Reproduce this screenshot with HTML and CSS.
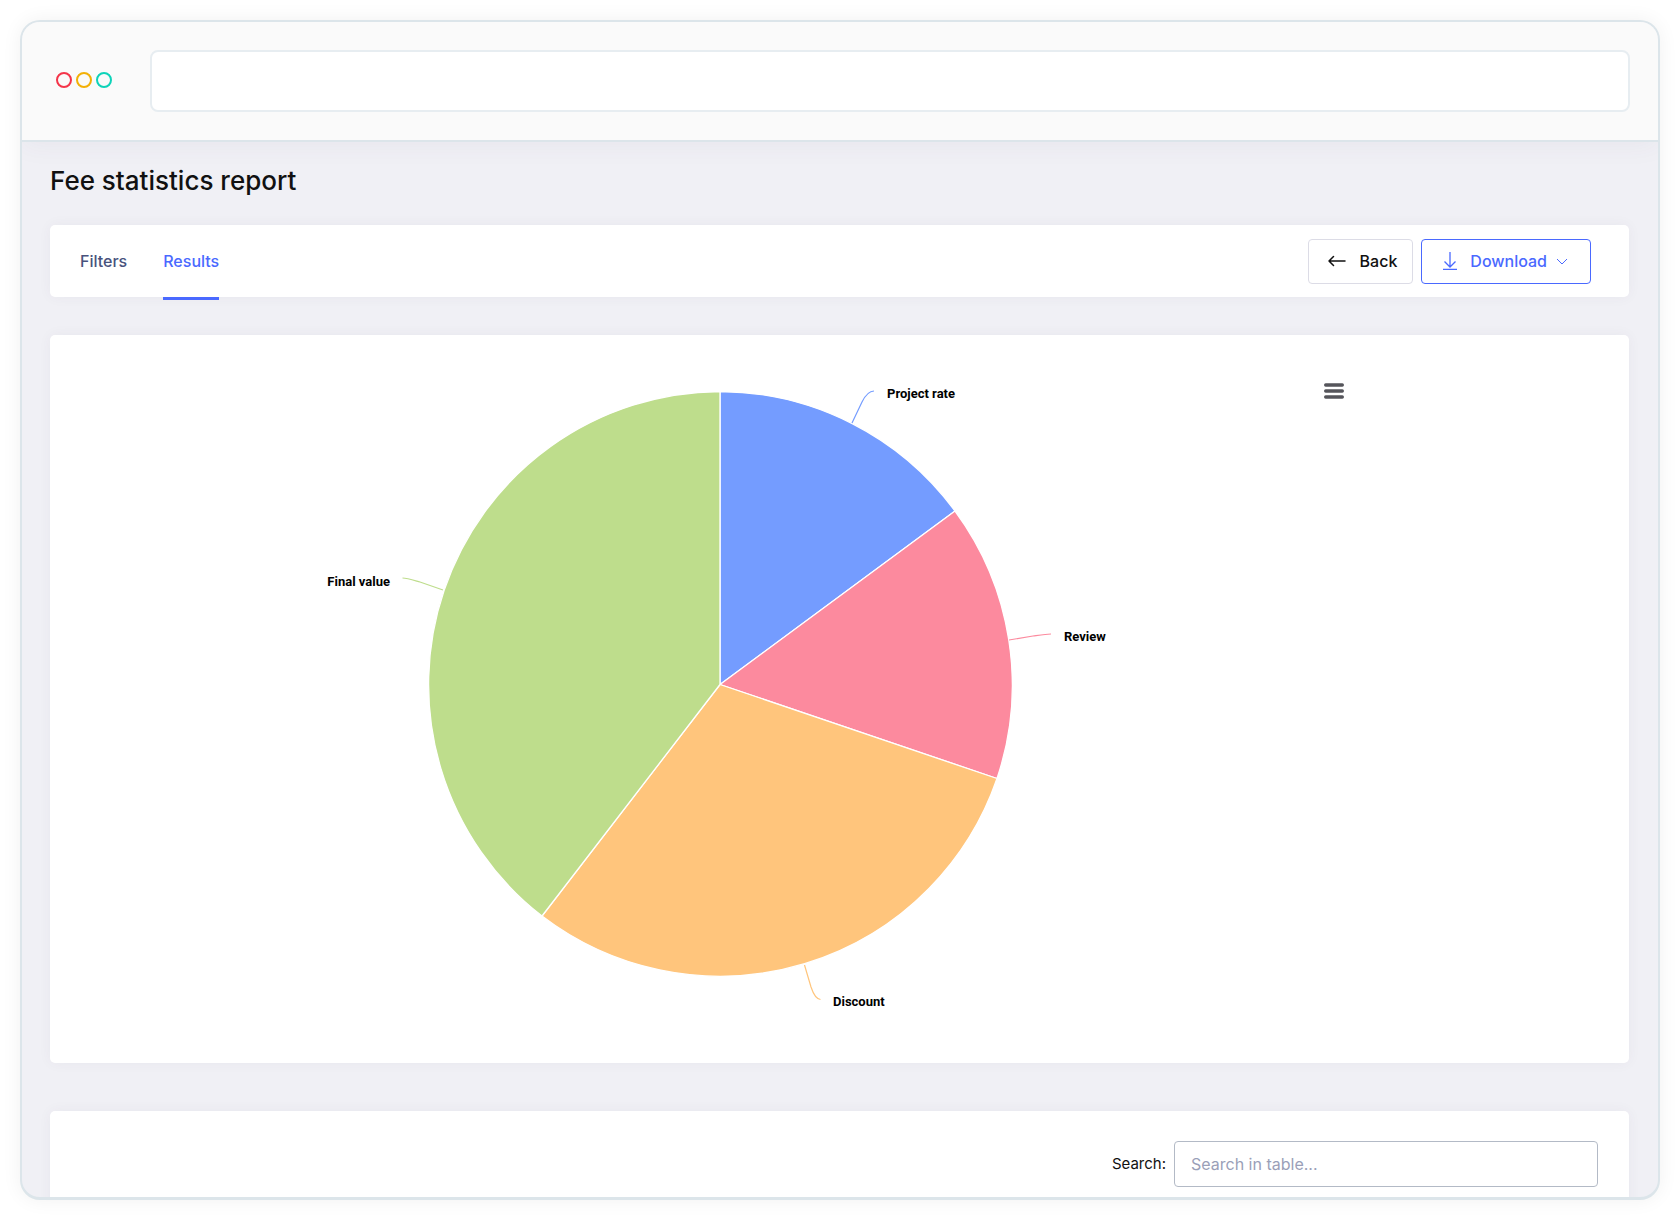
FILE: index.html
```html
<!DOCTYPE html>
<html lang="en">
<head>
<meta charset="utf-8">
<meta name="viewport" content="width=device-width, initial-scale=1">
<title>Fee statistics report</title>
<link rel="stylesheet" href="styles.css">
</head>
<body>
<div class="window">
  <header class="toolbar">
    <div class="lights">
      <span class="light light-red"></span>
      <span class="light light-yellow"></span>
      <span class="light light-green"></span>
    </div>
    <input class="address" type="text" aria-label="Address">
  </header>
  <main class="content">
    <h1 class="title">Fee statistics report</h1>

    <section class="card tabbar">
      <nav class="tabs">
        <a class="tab" href="#filters">Filters</a>
        <a class="tab tab-active" href="#results">Results</a>
      </nav>
      <div class="actions">
        <button class="btn btn-back" type="button">
          <svg width="18" height="12" viewBox="0 0 18 12" fill="none" stroke="currentColor" stroke-width="1.5" stroke-linecap="round" stroke-linejoin="round"><path d="M17 6H1M5.500 1.500L1 6l4.500 4.500"/></svg>
          Back
        </button>
        <button class="btn btn-download" type="button">
          <svg width="14" height="18" viewBox="0 0 14 18" fill="none" stroke="currentColor" stroke-width="1.300"><path d="M7 0v14.500M1.500 9.500L7 15l5.500-5.500M0 17.300h14"/></svg>
          <span>Download</span>
          <svg class="chevron" width="12" height="8" viewBox="0 0 12 8" fill="none" stroke="currentColor" stroke-width="1"><path d="M1 2l5 5 5-5"/></svg>
        </button>
      </div>
    </section>

    <section class="card chart-card">
      <div class="chart">
        <svg class="pie" viewBox="0 0 1280 668" role="img" aria-label="Fee breakdown by type">
          <g class="slices">
            <path fill="#749cff" d="M640 319.500V26.500A293 293 0 0 1 875 146Z"/>
            <path fill="#fc8a9e" d="M640 319.500L875 146A293 293 0 0 1 917 413.500Z"/>
            <path fill="#ffc57c" d="M640 319.500L917 413.500A293 293 0 0 1 462 551Z"/>
            <path fill="#bedd8c" d="M640 319.500L462 551A293 293 0 0 1 640 26.500Z"/>
          </g>
          <g class="connectors">
            <path stroke="#749cff" d="M794 26C789 26 785 31 782 37L772 58"/>
            <path stroke="#fc8a9e" d="M971 269C966 269 960 270 953 271L929 275"/>
            <path stroke="#ffc57c" d="M740.500 634.500C736 634 733 628 731 622L724.500 600"/>
            <path stroke="#bedd8c" d="M322.500 213C327 213 333 215 340 217L363 225"/>
          </g>
          <g class="labels">
            <text x="807" y="33">Project rate</text>
            <text x="984" y="276">Review</text>
            <text x="753" y="641">Discount</text>
            <text x="310" y="221" text-anchor="end">Final value</text>
          </g>
        </svg>
        <button class="menu" type="button" aria-label="Chart menu">
          <svg width="20" height="16" viewBox="0 0 20 16" stroke="#55555b" stroke-width="3.400" stroke-linecap="round"><path d="M1.700 2h16.600M1.700 8h16.600M1.700 14h16.600"/></svg>
        </button>
      </div>
    </section>

    <section class="card table-card">
      <label class="search-label" for="search">Search:</label>
      <input class="search" id="search" type="search" placeholder="Search in table...">
    </section>
  </main>
</div>
</body>
</html>
```
FILE: styles.css
```css
* { box-sizing: border-box; }

body {
  margin: 0;
  padding: 20px;
  background: #fff;
  color: #111;
  font: 16px/24px Inter, "Liberation Sans", sans-serif;
}

.window {
  height: calc(100vh - 40px);
  display: flex;
  flex-direction: column;
  overflow: hidden;
  border: 2px solid #dce5ea;
  border-bottom-width: 3px;
  border-radius: 20px;
  background: #f0f0f5;
  box-shadow: 0 0 20px rgba(0, 0, 0, 0.06);
}

.toolbar {
  flex: none;
  display: flex;
  align-items: center;
  gap: 38px;
  padding: 28px 28px 28px 34px;
  border-bottom: 2px solid #dce5ea;
  background: #fafafa;
  box-shadow: 0 4px 24px rgba(82, 63, 105, 0.05);
}

.lights { display: flex; gap: 4px; padding-bottom: 2px; }
.light { width: 16px; height: 16px; border: 2px solid; border-radius: 50%; }
.light-red { border-color: #f4354a; }
.light-yellow { border-color: #f3b006; }
.light-green { border-color: #0dd3b9; }

.address {
  flex: 1;
  min-width: 0;
  height: 62px;
  padding: 0 16px;
  border: 2px solid #e7edf1;
  border-radius: 8px;
  background: #fff;
  font: inherit;
}

.content { padding: 21px 29px 0 28px; }

.title {
  margin: 0 0 26px;
  font-size: 26px;
  line-height: 36px;
  font-weight: 500;
}

.card {
  border-radius: 5px;
  background: #fff;
  box-shadow: 0 0 13px rgba(82, 63, 105, 0.05);
}

.tabbar {
  display: flex;
  justify-content: space-between;
  align-items: center;
  height: 72px;
  margin-bottom: 38px;
  padding: 0 38px 0 30px;
}

.tabs { display: flex; gap: 36px; align-self: stretch; }
.tab {
  height: 75px;
  border-bottom: 3px solid transparent;
  color: #48527d;
  line-height: 72px;
  font-weight: 500;
  text-decoration: none;
}
.tab-active { border-color: #4a69ff; color: #4a69ff; }

.actions { display: flex; gap: 8px; }
.btn {
  display: flex;
  align-items: center;
  height: 45px;
  border: 1px solid #dcdce6;
  border-radius: 4px;
  background: #fff;
  color: #111;
  font: inherit;
  font-weight: 500;
}
.btn-back { gap: 14px; padding: 0 15px 0 19px; }
.btn-download {
  gap: 13px;
  padding: 0 22px 0 21px;
  border-color: #4a69ff;
  color: #4a69ff;
}
.chevron { margin-left: -4px; }

.chart-card { margin-bottom: 48px; padding: 30px; }
.chart { position: relative; max-width: 1280px; }
.pie { display: block; width: 100%; }
.slices { stroke: #fff; stroke-width: 1.3; stroke-linejoin: round; }
.connectors { fill: none; stroke-width: 1.2; }
.labels { fill: #000; font: bold 13px Roboto, sans-serif; }

.menu {
  position: absolute;
  top: 10px;
  right: 8px;
  display: flex;
  padding: 8px;
  border: 0;
  background: none;
}

.table-card {
  display: flex;
  justify-content: flex-end;
  align-items: center;
  gap: 8px;
  min-height: 120px;
  padding: 30px 31px 44px;
}
.search-label { font-size: 15px; }
.search {
  width: 424px;
  height: 46px;
  padding: 0 16px;
  border: 1px solid #b3bac6;
  border-radius: 4px;
  background: #fff;
  font: inherit;
}
.search::placeholder { color: #9a9fb8; opacity: 1; }
```
